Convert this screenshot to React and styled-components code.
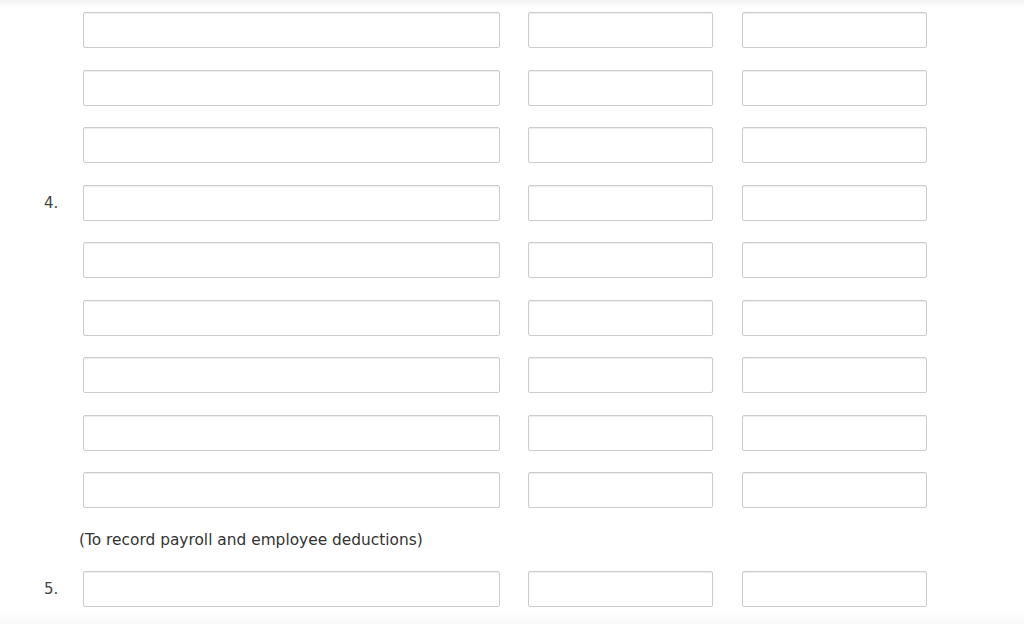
import React from 'react';
import styled, { createGlobalStyle } from 'styled-components';

const Global = createGlobalStyle`
  html, body {
    margin: 0;
    padding: 0;
    background: #fff;
    font-family: "DejaVu Sans", Verdana, sans-serif;
    color: #333;
  }
`

const Page = styled.div`
  position: relative;
  height: 624px;
  overflow: hidden;
  padding-top: 12px;
  box-sizing: border-box;

  &::before, &::after {
    content: "";
    position: absolute;
    left: 0;
    right: 0;
    pointer-events: none;
  }
  &::before {
    top: 0;
    height: 7px;
    background: linear-gradient(to bottom, rgba(0,0,0,.05), rgba(0,0,0,0));
  }
  &::after {
    bottom: 0;
    height: 13px;
    background: linear-gradient(to top, rgba(0,0,0,.03), rgba(0,0,0,0));
  }
`

const Rows = styled.div`
  display: flex;
  flex-direction: column;
  gap: 21.5px;
`

const Row = styled.div`
  display: flex;
  align-items: center;
  height: 36px;
`

const Label = styled.div`
  width: 83px;
  box-sizing: border-box;
  padding-left: 44px;
  font-size: 15px;
  color: #444;
`

const Field = styled.input`
  box-sizing: border-box;
  height: 36px;
  width: ${p => p.$w}px;
  margin-left: ${p => p.$gap || 0}px;
  border: 1px solid #ccc;
  border-radius: 2px;
  box-shadow: inset 0 1px 1px rgba(0,0,0,.07);
  background: #fff;
  padding: 0 6px;
  font: inherit;
  outline: none;
`

const Caption = styled.div`
  padding: 23px 0 0 79px;
  height: 63px;
  box-sizing: border-box;
  font-size: 15.4px;
  color: #333;
`

const EntryRow = ({ label }) => (
  <Row>
    <Label>{label}</Label>
    <Field $w={417} />
    <Field $w={185} $gap={28} />
    <Field $w={185} $gap={29} />
  </Row>
)

const labels = ['', '', '', '4.', '', '', '', '', '']

const App = () => (
  <Page>
    <Global />
    <Rows>
      {labels.map((l, i) => <EntryRow key={i} label={l} />)}
    </Rows>
    <Caption>(To record payroll and employee deductions)</Caption>
    <EntryRow label="5." />
  </Page>
)

export default App;
